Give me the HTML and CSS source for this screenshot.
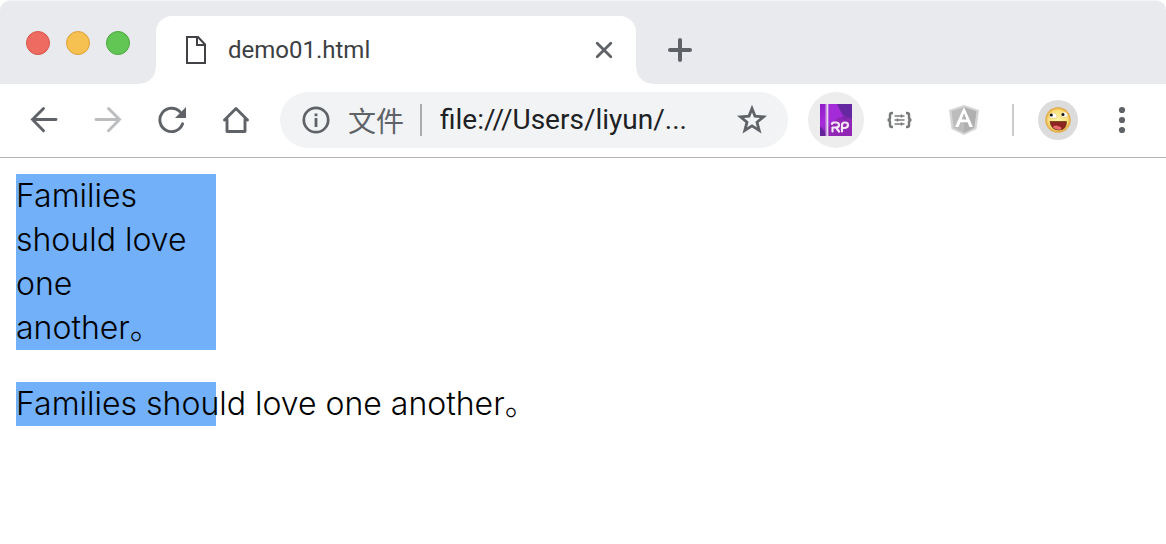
FILE: index.html
```html
<!DOCTYPE html>
<html lang="zh-CN">
<head>
<meta charset="utf-8">
<title>demo01.html</title>
<link rel="stylesheet" href="styles.css">
</head>
<body>
<header class="tabstrip">
  <div class="lights">
    <button class="light red" aria-label="Close window"></button>
    <button class="light yellow" aria-label="Minimize window"></button>
    <button class="light green" aria-label="Zoom window"></button>
  </div>
  <div class="tab">
    <svg class="file" width="20" height="28" viewBox="0 0 20 28" fill="none" stroke="#414245" stroke-width="2"><path d="M1 1H12L19 8.500V27H1Z"/><path d="M11 1V9H19"/></svg>
    <span class="tab-title">demo01.html</span>
    <button class="icon-button close" aria-label="Close tab"><svg width="18" height="18" viewBox="0 0 18 18" stroke="#5f6368" stroke-width="2.800" stroke-linecap="round"><path d="M2.200 2.200L15.800 15.800M15.800 2.200L2.200 15.800"/></svg></button>
  </div>
  <button class="icon-button new-tab" aria-label="New tab"><svg width="24" height="24" viewBox="0 0 24 24" stroke="#5f6368" stroke-width="4" stroke-linecap="round"><path d="M12 2V22M2 12H22"/></svg></button>
</header>
<nav class="toolbar">
  <div class="group">
    <button class="icon-button" aria-label="Back"><svg width="28" height="28" viewBox="0 0 28 28" fill="none" stroke="#5f6368" stroke-width="2.900" stroke-linecap="round"><path d="M26 13.500H2.500M13.500 2.500L2.500 13.500L13.500 24.700"/></svg></button>
    <button class="icon-button" aria-label="Forward" disabled><svg width="28" height="28" viewBox="0 0 28 28" fill="none" stroke="#bbbdbf" stroke-width="2.900" stroke-linecap="round"><path d="M2 13.500H25.500M14.500 2.500L25.500 13.500L14.500 24.700"/></svg></button>
    <button class="icon-button" aria-label="Reload"><svg width="28" height="28" viewBox="0 0 28 28"><path d="M24.600 17.800A11.700 11.700 0 1 1 22 5.800" fill="none" stroke="#5f6368" stroke-width="2.900" stroke-linecap="round"/><path d="M28 1V12H17Z" fill="#5f6368"/></svg></button>
    <button class="icon-button" aria-label="Home"><svg width="28" height="28" viewBox="0 0 28 28" fill="none" stroke="#5f6368" stroke-width="2.900" stroke-linecap="round" stroke-linejoin="round"><path d="M2.500 14L14 2.500L25.500 14M5 13V25.500H23V13"/></svg></button>
  </div>
  <div class="address">
    <svg width="28" height="28" viewBox="0 0 28 28"><circle cx="14" cy="14" r="12.200" fill="none" stroke="#5f6368" stroke-width="2.700"/><path d="M12.600 12H15.400V21H12.600ZM12.600 7.500H15.400V10.200H12.600Z" fill="#5f6368"/></svg>
    <label class="scheme" for="url">文件</label>
    <input class="url" id="url" type="text" value="file:///Users/liyun/...">
    <button class="icon-button star" aria-label="Bookmark"><svg width="30" height="30" viewBox="0 0 30 30" fill="none" stroke="#5f6368" stroke-width="2.800"><path d="M15 3.500L18 11.100L26.600 11.800L20 17.200L22.200 25.400L15 20.900L7.800 25.400L10 17.200L3.400 11.800L12 11.100Z"/></svg></button>
  </div>
  <div class="group">
    <button class="icon-button round" aria-label="Axure RP"><svg width="32" height="32" viewBox="0 0 32 32">
      <defs><linearGradient id="rp" x1="0" y1="0" x2="1" y2="1"><stop offset="0" stop-color="#8b1cc6"/><stop offset=".35" stop-color="#a82bdb"/><stop offset=".6" stop-color="#7c27ac"/><stop offset="1" stop-color="#aa29bd"/></linearGradient></defs>
      <path d="M0 0H32V32H0Z" fill="url(#rp)"/><path d="M16 0H32V15L20 9Z" fill="#6528a0"/><path d="M8 0H17L23 12L8 23Z" fill="#a42cd8"/><path d="M8 23L19 13L32 20V32H8Z" fill="#9226b4"/><path d="M0 22L6 29V32H0Z" fill="#65209b"/><path d="M5.500 0H8.500V32H5.500Z" fill="#cda1df"/><path d="M7 0H8V32H7Z" fill="#ead7f1"/>
      <g fill="none" stroke="#f5e6fa" stroke-width="2.200" stroke-linecap="round" stroke-linejoin="round"><path d="M12.500 27.500V23.500M12 20Q12 18.500 14 18.500H16Q19 18.500 19 21T16 23.500H12.500M16 23.500L19 27.500M22 27.500V21Q22 18.500 25 18.500Q28 18.500 28 21T25 24H22"/></g></svg></button>
    <button class="icon-button" aria-label="JSON viewer"><svg width="28" height="20" viewBox="0 0 28 20" fill="none" stroke="#77797b" stroke-width="2.500"><path d="M7 3H6Q4 3 4 5V7.500Q4 10 1.500 10Q4 10 4 12.500V15Q4 17 6 17H7M20 3H21Q23 3 23 5V7.500Q23 10 25.500 10Q23 10 23 12.500V15Q23 17 21 17H20"/><path d="M8.500 6H18.500M8.500 10H18.500M8.500 14H18.500M15.500 4.500V7.500M11.500 8.500V11.500M15.500 12.500V15.500" stroke-width="1.500"/></svg></button>
    <button class="icon-button" aria-label="AngularJS"><svg width="30" height="32" viewBox="0 0 30 32"><path d="M15 1L30 6L27.500 25L15 31L2.500 25L0 6Z" fill="#d5d5d5"/><path d="M15 3L27.500 7.200L25.300 23.700L15 29Z" fill="#b0b0b0"/><path d="M15 3L2.500 7.200L4.700 23.700L15 29Z" fill="#bcbcbc"/><path d="M15 3L24 23H20.500L18.600 18.300H11.400L9.500 23H6ZM15 8.900L12.500 15.400H17.500Z" fill="#fff" fill-rule="evenodd"/></svg></button>
  </div>
  <div class="separator"></div>
  <button class="icon-button avatar" aria-label="Profile"><svg width="26" height="26" viewBox="0 0 26 26">
    <defs><radialGradient id="face"><stop offset="0" stop-color="#fff3a5"/><stop offset=".75" stop-color="#fbe17a"/><stop offset="1" stop-color="#dfa03c"/></radialGradient></defs>
    <circle cx="13" cy="13" r="12.700" fill="url(#face)"/><path d="M4.500 11Q4 6 8 6Q12 6 12 11ZM16 10Q16 5 19.500 5Q23 5.500 22.500 10Z" fill="#fff" stroke="#dfbd62" stroke-width=".5"/><circle cx="6.300" cy="8" r="1.500" fill="#111"/><circle cx="18" cy="7.500" r="1.500" fill="#111"/><path d="M5 14.500H21.500Q21.500 23 14 23Q6 23 5 14.500Z" fill="#8e2420" stroke="#633014" stroke-width=".7"/><path d="M7.500 20Q11 17.500 14 19.500Q17 19.500 16 22.400Q11 23.500 7.500 20Z" fill="#e66c70"/></svg></button>
  <button class="icon-button menu" aria-label="Menu"><svg width="8" height="28" viewBox="0 0 8 28" fill="#5f6368"><circle cx="4" cy="4" r="3.100"/><circle cx="4" cy="14" r="3.100"/><circle cx="4" cy="24" r="3.100"/></svg></button>
</nav>
<main class="page">
  <p class="sample">Families should love one another。</p>
  <p class="sample nowrap">Families should love one another。</p>
</main>
</body>
</html>
```
FILE: styles.css
```css
* { box-sizing: border-box; }
body { margin: 0; background: #fff; font-family: Roboto, "Noto Sans CJK SC", sans-serif; }
button { border: 0; padding: 0; background: none; }
svg { display: block; flex: none; }
.tabstrip { display: flex; height: 84px; padding: 15px 0 0 26px; background: #e8eaed; border-top: 1px solid #f3f4f6; border-radius: 10px 10px 0 0; }
.lights { display: flex; gap: 16px; margin-right: 26px; padding-top: 15px; }
.light { width: 24px; height: 24px; border-radius: 50%; border: 1px solid; }
.red { background: #ed6b60; border-color: #d6544b; }
.yellow { background: #f6c150; border-color: #dba13d; }
.green { background: #62c655; border-color: #4ba63e; }
.tab { position: relative; display: flex; align-items: center; width: 480px; padding: 0 20px 0 30px; background: #fff; border-radius: 16px 16px 0 0; }
.tab::before, .tab::after { content: ""; position: absolute; bottom: 0; width: 16px; height: 16px; }
.tab::before { right: 100%; background: radial-gradient(circle at 0 0, #e8eaed 15px, #fff 16px); }
.tab::after { left: 100%; background: radial-gradient(circle at 100% 0, #e8eaed 15px, #fff 16px); }
.tab-title { flex: 1; margin-left: 22px; font: 24px/32px Roboto, sans-serif; color: #3c4043; }
.icon-button { display: flex; align-items: center; justify-content: center; flex: none; width: 56px; height: 56px; }
.close { width: 24px; height: 24px; }
.new-tab { margin: 6px 0 0 16px; }
.toolbar { display: flex; align-items: center; padding: 8px 16px 9px; border-bottom: 1px solid #b3b4b6; }
.group { display: flex; gap: 8px; }
.address { display: flex; align-items: center; flex: 1; min-width: 0; height: 56px; margin: 0 20px 0 16px; padding: 0 8px 0 22px; border-radius: 28px; background: #f1f3f4; }
.scheme { margin-left: 18px; padding-right: 16px; border-right: 2px solid #a9abae; color: #5f6368; font: 28px/32px "Noto Sans CJK SC", sans-serif; }
.url { flex: 1; min-width: 0; margin-left: 18px; padding: 0; border: 0; background: none; color: #202124; font: 28px/36px Roboto, sans-serif; }
.round { border-radius: 50%; background: #ededed; }
.separator { width: 2px; height: 32px; margin: 0 24px 0 20px; background: #ccc; }
.avatar { width: 40px; height: 40px; margin-right: 16px; border-radius: 50%; background: #dcdcdc; }
.page { padding: 16px; }
.sample { width: 200px; margin: 0 0 32px; background: #72b0fa; color: #000; font: 300 32px/44px Inter, "Noto Sans CJK SC", sans-serif; }
.nowrap { white-space: nowrap; }
```
